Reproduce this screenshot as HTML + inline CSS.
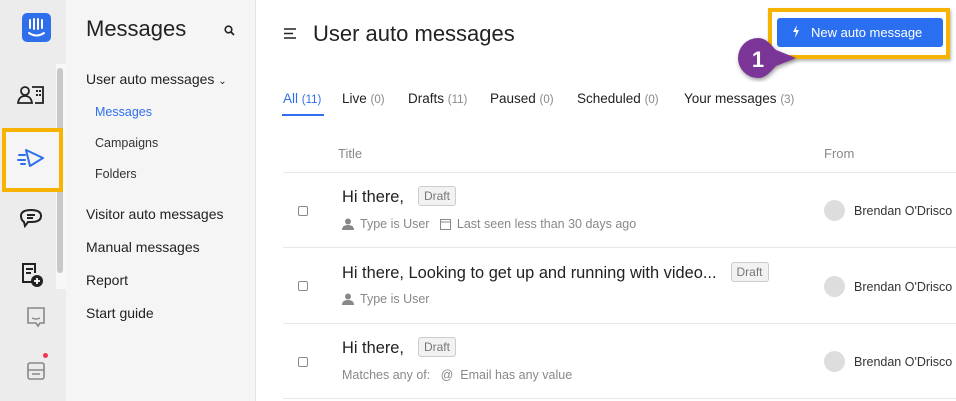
<!DOCTYPE html>
<html><head><meta charset="utf-8"><style>
*{box-sizing:border-box;margin:0;padding:0}
body{width:956px;height:401px;overflow:hidden;font-family:"Liberation Sans",Arial,sans-serif;background:#fff;position:relative;color:#222}
.rail{position:absolute;left:0;top:0;width:66px;height:401px;background:#ececec}
.side{position:absolute;left:66px;top:0;width:190px;height:401px;background:#f5f5f5;border-right:1px solid #e4e4e4}
.abs{position:absolute}
.nav{position:absolute;left:86px;font-size:14px;color:#222}
.sub{position:absolute;left:95px;font-size:12.5px;color:#333}
.tab{position:absolute;top:91px;font-size:13.5px;color:#222}
.tab span{color:#888;font-size:11.5px}
.row-line{position:absolute;left:283px;right:0;height:1px;background:#e8e8e8}
.cb{position:absolute;left:298px;width:10px;height:10px;border:1px solid #888;border-radius:2px}
.ttl{position:absolute;left:342px;font-size:16.4px;color:#222}
.draft{display:inline-block;font-size:12px;color:#777;border:1px solid #ccc;background:#f2f2f2;border-radius:3px;padding:2px 5px;margin-left:14px;vertical-align:2px}
.meta{position:absolute;left:342px;font-size:12.5px;color:#888;white-space:nowrap}
.meta svg{vertical-align:-2px;margin-right:6px}
.from{position:absolute;left:824px;font-size:12.5px;color:#333;white-space:nowrap}
.av{display:inline-block;width:21px;height:21px;border-radius:50%;background:#ddd;vertical-align:-6px;margin-right:9px}
</style></head><body>
<div class="rail"></div>
<div class="abs" style="left:56px;top:64px;width:10px;height:225px;background:#f7f7f7"></div>
<div class="abs" style="left:57px;top:68px;width:6px;height:205px;background:#c8c8c8;border-radius:3px"></div>
<div class="abs" style="left:22px;top:13px;width:29px;height:29px;background:#2f6fec;border-radius:5px">
<svg width="29" height="29" viewBox="0 0 29 29"><g stroke="#fff" stroke-width="2" stroke-linecap="round" fill="none"><path d="M8 7v8M12 6v10M16 6v10M20 7v8M7 20q7.5 5 15 0"/></g></svg></div>
<svg class="abs" style="left:17px;top:84px" width="28" height="22" viewBox="0 0 28 22"><g fill="none" stroke="#222" stroke-width="1.8"><circle cx="8" cy="7" r="4"/><path d="M1 19q1-7 7-7t7 7zM15 3h11v16h-8"/></g><g fill="#222"><rect x="19" y="6" width="2" height="2"/><rect x="22" y="6" width="2" height="2"/><rect x="19" y="10" width="2" height="2"/><rect x="22" y="10" width="2" height="2"/></g></svg>
<div class="abs" style="left:2px;top:128px;width:61px;height:64px;border:4px solid #f6b400;background:#f5f5f5"></div>
<svg class="abs" style="left:16px;top:147px" width="30" height="24" viewBox="0 0 30 24"><g fill="none" stroke="#2f6fec" stroke-width="2" stroke-linecap="round" stroke-linejoin="round"><path d="M10 3l17 8-13 8zM3 8h6M2 13h7M5 17h4"/></g></svg>
<svg class="abs" style="left:19px;top:206px" width="24" height="24" viewBox="0 0 24 24"><g fill="none" stroke="#222" stroke-width="2"><path d="M5 16q-3-2-3-6q0-6 10-6t10 6-10 6H9l-3 4z"/><path d="M8 9h8M8 12h6"/></g></svg>
<svg class="abs" style="left:20px;top:262px" width="24" height="26" viewBox="0 0 24 26"><g fill="none" stroke="#222" stroke-width="2"><path d="M13 20H3V2h12v9M6 7h7M6 11h5"/></g><circle cx="17" cy="19" r="6" fill="#222"/><path d="M17 16v6M14 19h6" stroke="#fff" stroke-width="1.8"/></svg>
<svg class="abs" style="left:26px;top:306px" width="20" height="22" viewBox="0 0 20 22"><path d="M2 2h16v15h-4l-2 3-2-3H2z" fill="none" stroke="#888" stroke-width="1.6"/><path d="M6 12q4 2 8 0" stroke="#888" stroke-width="1.4" fill="none"/></svg>
<div class="abs" style="left:43px;top:353px;width:5px;height:5px;border-radius:50%;background:#f0364f"></div>
<svg class="abs" style="left:26px;top:360px" width="20" height="22" viewBox="0 0 20 22"><g fill="none" stroke="#888" stroke-width="1.6"><rect x="2" y="3" width="16" height="16" rx="2"/><path d="M2 10h16M6 14h8"/></g></svg>

<div class="side"></div>
<div class="abs" style="left:86px;top:16px;font-size:22px;color:#222">Messages</div>
<svg class="abs" style="left:224px;top:25px" width="11" height="11" viewBox="0 0 11 11"><circle cx="4.5" cy="4.5" r="3.3" fill="none" stroke="#222" stroke-width="1.6"/><path d="M7 7l3 3" stroke="#222" stroke-width="1.8"/></svg>
<div class="nav" style="top:71px">User auto messages <span style="font-size:10px">&#8964;</span></div>
<div class="sub" style="top:105px;color:#2f6fec">Messages</div>
<div class="sub" style="top:136px">Campaigns</div>
<div class="sub" style="top:167px">Folders</div>
<div class="nav" style="top:206px">Visitor auto messages</div>
<div class="nav" style="top:239px">Manual messages</div>
<div class="nav" style="top:272px">Report</div>
<div class="nav" style="top:305px">Start guide</div>

<svg class="abs" style="left:284px;top:28px" width="13" height="11" viewBox="0 0 13 11"><path d="M0 1h12M0 5.5h9M0 10h12" stroke="#222" stroke-width="1.6"/></svg>
<div class="abs" style="left:313px;top:21px;font-size:22px;color:#222">User auto messages</div>
<div class="tab" style="left:283px;color:#2f6fec">All <span style="color:#2f6fec">(11)</span></div>
<div class="abs" style="left:282px;top:114px;width:42px;height:2px;background:#2f6fec"></div>
<div class="tab" style="left:342px">Live <span>(0)</span></div>
<div class="tab" style="left:408px">Drafts <span>(11)</span></div>
<div class="tab" style="left:490px">Paused <span>(0)</span></div>
<div class="tab" style="left:577px">Scheduled <span>(0)</span></div>
<div class="tab" style="left:684px">Your messages <span>(3)</span></div>

<div class="abs" style="left:338px;top:146px;font-size:13px;color:#888">Title</div>
<div class="abs" style="left:824px;top:146px;font-size:13px;color:#888">From</div>
<div class="row-line" style="top:172px"></div>
<div class="row-line" style="top:247px"></div>
<div class="row-line" style="top:323px"></div>
<div class="row-line" style="top:398px"></div>

<div class="cb" style="top:206px"></div>
<div class="ttl" style="top:186px">Hi there,<span class="draft">Draft</span></div>
<div class="meta" style="top:217px"><svg width="12" height="12" viewBox="0 0 12 12"><circle cx="6" cy="3.5" r="3" fill="#888"/><path d="M0 12q0-5 6-5t6 5z" fill="#888"/></svg>Type is User &nbsp;&nbsp;<svg width="11" height="12" viewBox="0 0 11 12"><rect x="0.5" y="1.5" width="10" height="10" fill="none" stroke="#888"/><path d="M0.5 4h10" stroke="#888"/></svg>Last seen less than 30 days ago</div>
<div class="from" style="top:200px"><span class="av"></span>Brendan O'Drisco</div>

<div class="cb" style="top:281px"></div>
<div class="ttl" style="top:262px">Hi there, Looking to get up and running with video...<span class="draft">Draft</span></div>
<div class="meta" style="top:292px"><svg width="12" height="12" viewBox="0 0 12 12"><circle cx="6" cy="3.5" r="3" fill="#888"/><path d="M0 12q0-5 6-5t6 5z" fill="#888"/></svg>Type is User</div>
<div class="from" style="top:276px"><span class="av"></span>Brendan O'Drisco</div>

<div class="cb" style="top:357px"></div>
<div class="ttl" style="top:337px">Hi there,<span class="draft">Draft</span></div>
<div class="meta" style="top:368px">Matches any of: &nbsp;&nbsp;@ &nbsp;Email has any value</div>
<div class="from" style="top:351px"><span class="av"></span>Brendan O'Drisco</div>

<div class="abs" style="left:768px;top:8px;width:182px;height:51px;border:4px solid #f6b400;background:#fff;box-shadow:1px 2px 3px rgba(0,0,0,.3)"></div>
<div class="abs" style="left:777px;top:18px;width:166px;height:29px;background:#2a6ff0;border-radius:3px;color:#fff;font-size:13px;line-height:29px;padding-left:34px">New auto message</div>
<svg class="abs" style="left:792px;top:25px" width="8" height="13" viewBox="0 0 8 13"><path d="M5 0L1 7h3l-1 6 4-8H4z" fill="#fff"/></svg>
<svg class="abs" style="left:734px;top:36px" width="66" height="46" viewBox="0 0 66 46"><path d="M24 2a20 20 0 1 0 0 40c8 0 12-6 18-12l20-8-20-8C36 8 32 2 24 2z" fill="#7a3597" style="filter:drop-shadow(1px 2px 2px rgba(0,0,0,.4))"/><text x="24" y="31" font-family="Liberation Sans" font-size="22" font-weight="bold" fill="#fff" text-anchor="middle">1</text></svg>
</body></html>
